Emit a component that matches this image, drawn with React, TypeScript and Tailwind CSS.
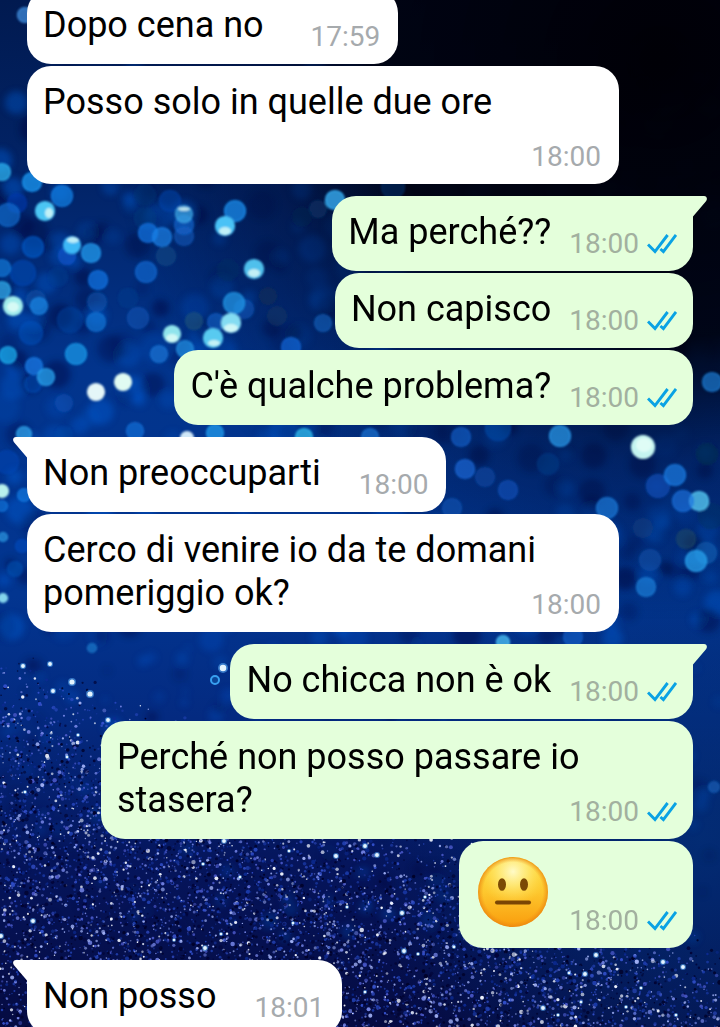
type Message = {
  text: string;
  time: string;
  emoji?: boolean;
};

type Group = {
  from: "me" | "them";
  tail?: boolean;
  messages: Message[];
};

const groups: Group[] = [
  {
    from: "them",
    messages: [
      { text: "Dopo cena no\u00a0", time: "17:59" },
      { text: "Posso solo in quelle due ore\u00a0", time: "18:00" },
    ],
  },
  {
    from: "me",
    tail: true,
    messages: [
      { text: "Ma perché??", time: "18:00" },
      { text: "Non capisco", time: "18:00" },
      { text: "C'è qualche problema?", time: "18:00" },
    ],
  },
  {
    from: "them",
    tail: true,
    messages: [
      { text: "Non preoccuparti", time: "18:00" },
      { text: "Cerco di venire io da te domani pomeriggio ok?", time: "18:00" },
    ],
  },
  {
    from: "me",
    tail: true,
    messages: [
      { text: "No chicca non è ok", time: "18:00" },
      { text: "Perché non posso passare io stasera?", time: "18:00" },
      { text: "Faccina neutra", time: "18:00", emoji: true },
    ],
  },
  {
    from: "them",
    tail: true,
    messages: [{ text: "Non posso", time: "18:01" }],
  },
];

// Out-of-focus lights: x, y, radius, colour, opacity
type Spot = [number, number, number, string, number];

const spots: Spot[] = [
  [25, 15, 8, "#4a9cf0", 0.8],
  [2, 172, 9, "#2fb4f0", 0.9],
  [32, 182, 10, "#189cf8", 0.9],
  [62, 196, 11, "#1583e8", 0.85],
  [17, 203, 10, "#0838b0", 0.7],
  [8, 215, 12, "#0f74d8", 0.75],
  [33, 247, 11, "#0a60d0", 0.7],
  [23, 273, 13, "#0a50c0", 0.6],
  [2, 268, 9, "#1480e0", 0.8],
  [2, 290, 9, "#30b0f0", 0.9],
  [36, 300, 10, "#1058b0", 0.6],
  [39, 306, 9, "#1a8ae8", 0.85],
  [67, 256, 9, "#1458d0", 0.7],
  [91, 253, 10, "#259ff2", 0.9],
  [98, 280, 10, "#0f78e8", 0.85],
  [97, 302, 10, "#0d58b0", 0.65],
  [96, 322, 10, "#1478d8", 0.8],
  [31, 333, 12, "#0a54c0", 0.6],
  [8, 355, 9, "#1fb0f0", 0.9],
  [34, 366, 9, "#1a80ec", 0.85],
  [33, 384, 9, "#0c54c0", 0.6],
  [46, 377, 9, "#2ba6f0", 0.9],
  [76, 354, 11, "#18a0f0", 0.85],
  [64, 403, 9, "#1054b8", 0.6],
  [58, 277, 10, "#0a3c90", 0.5],
  [70, 320, 13, "#0848a8", 0.5],
  [138, 318, 11, "#1258b8", 0.65],
  [128, 298, 10, "#0e4090", 0.5],
  [145, 218, 11, "#0e3c80", 0.5],
  [148, 233, 10, "#1478e8", 0.85],
  [162, 237, 10, "#1a84ea", 0.85],
  [146, 272, 11, "#1070dc", 0.75],
  [184, 236, 10, "#1258b8", 0.75],
  [184, 225, 10, "#1668d0", 0.75],
  [166, 256, 10, "#14508a", 0.6],
  [170, 201, 11, "#0a48b0", 0.6],
  [145, 195, 11, "#0a3478", 0.5],
  [235, 211, 11, "#1a90f0", 0.9],
  [194, 321, 9, "#1c547c", 0.75],
  [159, 354, 9, "#1a78d8", 0.8],
  [185, 349, 9, "#2494e4", 0.85],
  [216, 322, 9, "#1468d0", 0.7],
  [244, 309, 10, "#1058b8", 0.65],
  [234, 303, 11, "#2098e8", 0.9],
  [228, 270, 11, "#0a3064", 0.5],
  [268, 296, 9, "#0e2c58", 0.7],
  [277, 316, 10, "#0e3264", 0.7],
  [323, 323, 9, "#1060b8", 0.8],
  [291, 347, 10, "#1568d8", 0.85],
  [318, 209, 9, "#0c3468", 0.7],
  [302, 217, 10, "#082450", 0.5],
  [335, 200, 10, "#38b4fa", 0.95],
  [393, 187, 12, "#06306a", 0.7],
  [64, 435, 9, "#0a48a8", 0.5],
  [24, 434, 8, "#30a8f0", 0.9],
  [135, 431, 9, "#1874dc", 0.8],
  [215, 433, 9, "#20a0f0", 0.9],
  [304, 437, 9, "#30c0f0", 0.9],
  [370, 437, 9, "#1a78d8", 0.8],
  [7, 462, 12, "#0a4cc0", 0.5],
  [24, 495, 7, "#1480e8", 0.8],
  [2, 506, 6, "#1880e8", 0.7],
  [3, 537, 5, "#30a0e8", 0.8],
  [15, 569, 8, "#0a50b0", 0.7],
  [22, 546, 7, "#0a50c8", 0.6],
  [461, 437, 10, "#1560c8", 0.8],
  [498, 428, 13, "#0a50b0", 0.6],
  [560, 436, 11, "#2898e8", 0.9],
  [465, 469, 10, "#1a6cdc", 0.8],
  [485, 477, 10, "#0e4ca8", 0.65],
  [508, 490, 10, "#1054bc", 0.75],
  [548, 464, 11, "#0a3c88", 0.6],
  [452, 508, 10, "#0e58b8", 0.7],
  [607, 508, 11, "#1a80e0", 0.8],
  [712, 382, 10, "#1a80d8", 0.85],
  [707, 454, 11, "#0a2c50", 0.7],
  [658, 486, 12, "#1050b8", 0.8],
  [675, 475, 11, "#1a80e8", 0.85],
  [643, 528, 10, "#103c80", 0.7],
  [711, 516, 13, "#0a3468", 0.6],
  [686, 539, 10, "#204c68", 0.65],
  [706, 553, 11, "#1060b0", 0.7],
  [696, 561, 11, "#28a4f0", 0.9],
  [650, 560, 11, "#1050a8", 0.7],
  [646, 587, 10, "#1c80d8", 0.85],
  [573, 637, 10, "#1260c8", 0.8],
  [503, 642, 7, "#50c8f8", 0.9],
  [92, 648, 5, "#2080d0", 0.8],
  [714, 787, 6, "#1a68c0", 0.7],
  [699, 501, 10, "#58ccf6", 0.95],
  [683, 501, 11, "#1c74e0", 0.8],
  [184, 214, 9, "#44b0ea", 0.8],
];

const brightSpots: Spot[] = [
  [45, 211, 10, "#4cc6f4", 1],
  [72, 245, 9, "#3cb8f6", 1],
  [13, 306, 10, "#a0ecec", 1],
  [96, 392, 9, "#e4f6f8", 1],
  [123, 382, 9, "#e0fbf2", 1],
  [225, 226, 10, "#48c2f6", 1],
  [254, 269, 10, "#50c0ec", 1],
  [231, 323, 10, "#84dcf2", 1],
  [213, 338, 10, "#58caf0", 1],
  [172, 334, 9, "#90e4ec", 1],
  [187, 438, 7, "#d0e8f8", 1],
  [643, 447, 12, "#c4f4f0", 1],
  [2, 491, 7, "#b8f0ec", 1],
  [3, 598, 5, "#84d4ec", 1],
];

// White-hot areas of the brightest lights: x, y, rx, ry
const flares: [number, number, number, number][] = [
  [49, 213, 4, 5],
  [73, 240, 6, 3],
  [184, 209, 6, 2],
  [225, 231, 6, 4],
  [254, 273, 6, 4],
  [172, 338, 6, 4],
  [231, 328, 7, 4],
  [214, 343, 6, 3],
  [13, 307, 6, 5],
  [644, 445, 8, 7],
];

// Sharp sparkles: x, y, radius
const sparkles: [number, number, number][] = [
  [223, 668, 5],
  [72, 682, 4],
  [90, 694, 4],
  [50, 664, 3],
  [23, 666, 3],
  [53, 691, 3],
  [108, 720, 3],
  [78, 735, 2],
  [67, 757, 2],
  [25, 792, 2],
  [224, 841, 3],
  [203, 864, 2],
  [336, 856, 3],
  [365, 846, 3],
  [377, 855, 3],
  [289, 851, 2],
  [402, 913, 3],
  [404, 951, 3],
  [418, 954, 2],
  [425, 897, 2],
  [347, 907, 2],
  [240, 877, 2],
  [293, 923, 2],
  [205, 948, 3],
  [221, 934, 2],
  [33, 921, 3],
  [1, 936, 3],
  [174, 940, 2],
  [596, 955, 3],
  [585, 974, 3],
  [569, 973, 2],
  [543, 1008, 3],
  [581, 1002, 2],
  [558, 1015, 2],
  [626, 1007, 2],
  [676, 1015, 2],
  [663, 962, 3],
  [683, 967, 3],
  [641, 988, 2],
  [454, 947, 2],
  [365, 992, 2],
];

// Small seeded generator so the wallpaper is the same on every render
function createRandom(seed: number) {
  let s = seed;
  return () => {
    s = (s * 1664525 + 1013904223) % 4294967296;
    return s / 4294967296;
  };
}

const random = createRandom(42);

const glitterColors = [
  "#0c2a90",
  "#1a3aa8",
  "#2444b8",
  "#3350cc",
  "#4a58c8",
  "#7484e4",
  "#a0b0f4",
  "#f0f4ff",
  "#01022a",
  "#01022a",
  "#020438",
];

// The glitter gets in focus towards the bottom left
const glitter = Array.from({ length: 17000 }, () => {
  const x = random() * 720;
  const y = 640 + random() * 390;
  const edge = 670 + x * 0.4;
  const focus = Math.min(1, Math.max(0, (y - edge + 30) / 110));
  return {
    x,
    y,
    r: 0.7 + random() * random() * 1.7,
    color: glitterColors[Math.floor(random() * glitterColors.length)],
    opacity: 0.5 + random() * 0.5,
    keep: random() < focus,
  };
}).filter((g) => g.keep);

const haze = Array.from({ length: 700 }, () => {
  const x = random() * 720;
  const y = 60 + random() * 880;
  return {
    x,
    y,
    r: y > 640 ? 3 + random() * 5 : 6 + random() * 9,
    color: random() < 0.45 ? "#010a34" : "#0a5cd4",
    opacity: (0.15 + random() * 0.3) * (y > 640 ? 0.6 : 1),
  };
});

function Wallpaper() {
  return (
    <svg
      className="absolute inset-0 h-full w-full"
      viewBox="0 0 720 1027"
      preserveAspectRatio="xMidYMid slice"
      aria-hidden="true"
    >
      <defs>
        <linearGradient id="sky" x1="0" y1="0" x2="0" y2="1">
          <stop offset="0" stopColor="#011a50" />
          <stop offset="0.18" stopColor="#022468" />
          <stop offset="0.36" stopColor="#02348c" />
          <stop offset="0.58" stopColor="#023590" />
          <stop offset="0.7" stopColor="#042a80" />
          <stop offset="0.84" stopColor="#05155c" />
          <stop offset="1" stopColor="#050b42" />
        </linearGradient>
        <radialGradient
          id="night"
          gradientUnits="userSpaceOnUse"
          cx="660"
          cy="60"
          r="560"
        >
          <stop offset="0" stopColor="#000006" />
          <stop offset="0.5" stopColor="#00020e" stopOpacity="0.92" />
          <stop offset="0.72" stopColor="#010a2c" stopOpacity="0.4" />
          <stop offset="1" stopColor="#010a2c" stopOpacity="0" />
        </radialGradient>
        <radialGradient
          id="glow"
          gradientUnits="userSpaceOnUse"
          cx="700"
          cy="840"
          r="330"
        >
          <stop offset="0" stopColor="#023078" stopOpacity="0.8" />
          <stop offset="1" stopColor="#023078" stopOpacity="0" />
        </radialGradient>
        <filter id="soft" x="-5%" y="-5%" width="110%" height="110%">
          <feGaussianBlur stdDeviation="1.2" />
        </filter>
        <filter id="softer" x="-5%" y="-5%" width="110%" height="110%">
          <feGaussianBlur stdDeviation="3" />
        </filter>
      </defs>

      <rect width="720" height="1027" fill="url(#sky)" />
      <rect width="720" height="1027" fill="url(#glow)" />
      <g filter="url(#softer)">
        {haze.map((h, i) => (
          <circle
            key={i}
            cx={h.x}
            cy={h.y}
            r={h.r}
            fill={h.color}
            opacity={h.opacity}
          />
        ))}
      </g>
      <rect width="720" height="1027" fill="url(#night)" />

      <g filter="url(#soft)">
        {[...spots, ...brightSpots].map(([x, y, r, color, opacity], i) => (
          <circle
            key={i}
            cx={x}
            cy={y}
            r={r - 0.5}
            fill={color}
            fillOpacity={opacity === 1 ? 1 : opacity * 0.8}
            stroke={color}
            strokeOpacity={opacity}
            strokeWidth="1.2"
          />
        ))}
        {flares.map(([x, y, rx, ry], i) => (
          <ellipse
            key={i}
            cx={x}
            cy={y}
            rx={rx}
            ry={ry}
            fill="#e8fff8"
            opacity="0.75"
          />
        ))}
      </g>

      <g>
        {glitter.map((g, i) => (
          <circle
            key={i}
            cx={g.x}
            cy={g.y}
            r={g.r}
            fill={g.color}
            opacity={g.opacity}
          />
        ))}
        {sparkles.map(([x, y, r], i) => (
          <g key={i}>
            <circle cx={x} cy={y} r={r} fill="#58a8f0" opacity="0.6" />
            <circle cx={x} cy={y} r={r * 0.65} fill="#e4f4ff" />
          </g>
        ))}
        <circle
          cx="215"
          cy="680"
          r="4"
          fill="#0a4498"
          stroke="#38a0f0"
          strokeWidth="2"
        />
      </g>
    </svg>
  );
}

function ReadTicks() {
  return (
    <svg
      className="h-[20px] w-[30px]"
      viewBox="0 0 30 20"
      fill="none"
      stroke="#0aa2e4"
      strokeWidth="2.9"
      role="img"
      aria-label="Letto"
    >
      <path d="M1 10.5L8 17.6L20.6 1" />
      <path d="M13.4 15L16.4 17.6L29 1" />
    </svg>
  );
}

function NeutralFace({ label }: { label: string }) {
  return (
    <svg
      className="mb-[6px] h-[75px] w-[76px]"
      viewBox="0 0 76 75"
      role="img"
      aria-label={label}
    >
      <defs>
        <linearGradient id="face" x1="0" y1="0" x2="0" y2="1">
          <stop offset="0" stopColor="#fddc3c" />
          <stop offset="0.5" stopColor="#fdc72e" />
          <stop offset="1" stopColor="#f99c0c" />
        </linearGradient>
        <radialGradient id="shine" cx="0.5" cy="0.2" r="0.5">
          <stop offset="0" stopColor="#fffbc8" />
          <stop offset="0.4" stopColor="#fff08a" stopOpacity="0.75" />
          <stop offset="1" stopColor="#ffe04a" stopOpacity="0" />
        </radialGradient>
        <radialGradient id="rim" cx="0.5" cy="0.5" r="0.5">
          <stop offset="0.85" stopColor="#ee8a10" stopOpacity="0" />
          <stop offset="1" stopColor="#e87f10" stopOpacity="0.7" />
        </radialGradient>
      </defs>
      <circle cx="38" cy="36" r="35" fill="url(#face)" />
      <circle cx="38" cy="36" r="34" fill="url(#shine)" />
      <circle cx="38" cy="36" r="35" fill="url(#rim)" />
      <ellipse cx="27" cy="28.5" rx="4" ry="6.3" fill="#7b4a05" />
      <ellipse cx="49" cy="28.5" rx="4" ry="6.3" fill="#7b4a05" />
      <path
        d="M22 46.5H54"
        stroke="#7a4504"
        strokeWidth="4"
        strokeLinecap="round"
      />
    </svg>
  );
}

function Tail({ mine }: { mine: boolean }) {
  return (
    <svg
      className={
        mine
          ? "absolute top-0 -right-[14px] h-[22px] w-[15px] -scale-x-100 text-[#e4ffdb]"
          : "absolute top-0 -left-[14px] h-[22px] w-[15px] text-white"
      }
      viewBox="0 0 15 22"
      fill="currentColor"
      aria-hidden="true"
    >
      <path d="M15 0H3C0.2 0 -0.8 3 1 5.2L14 20.5L15 22Z" />
    </svg>
  );
}

function Meta({ time, mine }: { time: string; mine: boolean }) {
  return (
    <span
      className={`float-right mt-4 flex items-center gap-2 text-[28px] leading-[33px] ${
        mine ? "ml-[18px] text-[#a2b09f]" : "ml-[38px] text-[#a6aaad]"
      }`}
    >
      <time>{time}</time>
      {mine && <ReadTicks />}
    </span>
  );
}

function Bubble({
  message,
  mine,
  tail,
}: {
  message: Message;
  mine: boolean;
  tail: boolean;
}) {
  return (
    <li
      className={[
        "relative max-w-[592px] rounded-[24px] pt-[15px] pb-[11px] pl-4",
        mine ? "self-end bg-[#e4ffdb] pr-4" : "self-start bg-white pr-[18px]",
        tail ? (mine ? "rounded-tr-none" : "rounded-tl-none") : "",
      ].join(" ")}
    >
      {tail && <Tail mine={mine} />}
      {message.emoji ? (
        <div className="flex items-end">
          <NeutralFace label={message.text} />
          <Meta time={message.time} mine={mine} />
        </div>
      ) : (
        <p className="flow-root text-[36px] leading-[43px] text-black">
          {message.text}
          <Meta time={message.time} mine={mine} />
        </p>
      )}
    </li>
  );
}

export default function App() {
  return (
    <main className="relative h-screen overflow-hidden bg-[#02205c] font-[Roboto,sans-serif]">
      <Wallpaper />

      {/* The list is scrolled a little, so the first bubble is cut at the top */}
      <div className="relative -mt-[11px] flex flex-col gap-3 px-[27px]">
        {groups.map((group, i) => (
          <ul key={i} className="flex flex-col gap-0.5">
            {group.messages.map((message, j) => (
              <Bubble
                key={j}
                message={message}
                mine={group.from === "me"}
                tail={Boolean(group.tail) && j === 0}
              />
            ))}
          </ul>
        ))}
      </div>
    </main>
  );
}
